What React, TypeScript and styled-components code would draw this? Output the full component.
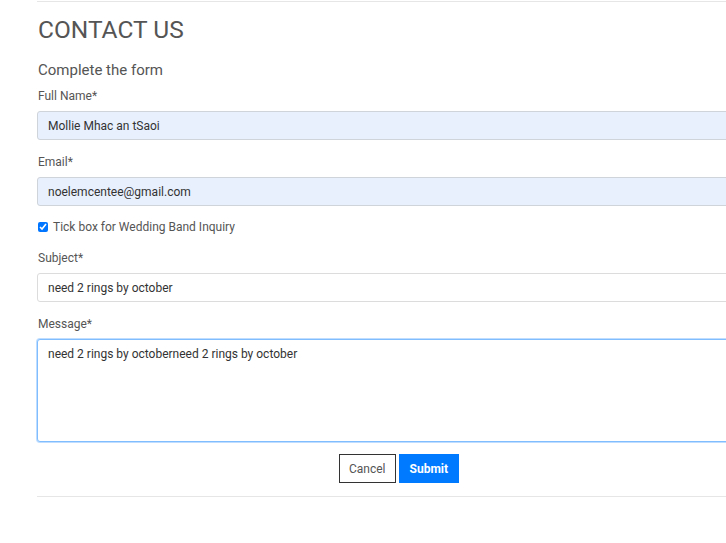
import React, { useEffect, useRef } from "react";
import styled, { createGlobalStyle } from "styled-components";

const Global = createGlobalStyle`
  html, body { margin: 0; padding: 0; background: #fff; overflow: hidden; }
  body { font-family: Roboto, "Liberation Sans", Arial, sans-serif; }
  * { box-sizing: border-box; }
`;

const Page = styled.div`
  width: 726px;
  height: 543px;
  overflow: hidden;
  padding-left: 37px;
`;

const Container = styled.div`
  width: 722px;
  border-top: 1px solid #e6e6e6;
  margin-top: 1px;
`;

const Title = styled.h1`
  margin: 13px 0 0 1px;
  font-size: 24.5px;
  font-weight: 400;
  line-height: 30px;
  color: #555;
`;

const Subtitle = styled.h2`
  margin: 15px 0 0 1px;
  font-size: 15px;
  font-weight: 400;
  line-height: 20px;
  color: #555;
`;

const Form = styled.form`
  display: flex;
  flex-direction: column;
  margin-top: 8px;
  padding-bottom: 13px;
  border-bottom: 1px solid #e6e6e6;
`;

const Group = styled.div<{ $last?: boolean }>`
  display: flex;
  flex-direction: column;
  margin-bottom: ${(p) => (p.$last ? "12px" : "14px")};
`;

const Label = styled.label`
  font-size: 12px;
  line-height: 16px;
  color: #555;
  margin: 0 0 7px 1px;
`;

const Input = styled.input<{ $autofill?: boolean }>`
  height: 29px;
  width: 100%;
  border: 1px solid ${(p) => (p.$autofill ? "#ced4da" : "#dcdcdc")};
  border-radius: 3px;
  background: ${(p) => (p.$autofill ? "#e8f0fe" : "#fff")};
  padding: 0 10px;
  font-family: Roboto, "Liberation Sans", Arial, sans-serif;
  font-size: 12px;
  color: #333;
  outline: none;
`;

const TextArea = styled.textarea`
  height: 103px;
  width: 100%;
  border: 1px solid #80bdff;
  border-radius: 3px;
  box-shadow: 0 0 0 1px rgba(0, 123, 255, 0.25);
  padding: 6px 10px;
  font-family: Roboto, "Liberation Sans", Arial, sans-serif;
  font-size: 12px;
  line-height: 16px;
  color: #333;
  resize: none;
  outline: none;
  caret-color: #333;
`;

const CheckRow = styled.label`
  display: flex;
  align-items: center;
  gap: 5px;
  font-size: 12px;
  color: #555;
  margin: -1px 0 15px 0;
  line-height: 16px;
`;

const Check = styled.input`
  width: 10px;
  height: 10px;
  margin: 0 0 0 1px;
  accent-color: #0075ff;
`;

const Actions = styled.div`
  display: flex;
  justify-content: center;
  gap: 3px;
  margin-left: 2px;
`;

const Button = styled.button<{ $primary?: boolean }>`
  height: 29px;
  padding: 0 ${(p) => (p.$primary ? "10px" : "9px")};
  border: 1px solid ${(p) => (p.$primary ? "#007bff" : "#333")};
  background: ${(p) => (p.$primary ? "#007bff" : "#fff")};
  color: ${(p) => (p.$primary ? "#fff" : "#555")};
  font-family: Roboto, "Liberation Sans", Arial, sans-serif;
  font-size: 12px;
  font-weight: ${(p) => (p.$primary ? 700 : 400)};
  border-radius: 0;
`;

const MESSAGE = "need 2 rings by octoberneed 2 rings by october";

export default function App() {
  const ref = useRef<HTMLTextAreaElement>(null);
  useEffect(() => {
    const el = ref.current;
    if (el) {
      el.focus();
      el.setSelectionRange(MESSAGE.length, MESSAGE.length);
    }
  }, []);
  return (
    <>
      <Global />
      <Page>
        <Container>
          <Title>CONTACT US</Title>
          <Subtitle>Complete the form</Subtitle>
          <Form onSubmit={(e) => e.preventDefault()}>
            <Group>
              <Label>Full Name*</Label>
              <Input $autofill defaultValue="Mollie Mhac an tSaoi" />
            </Group>
            <Group>
              <Label>Email*</Label>
              <Input $autofill defaultValue="noelemcentee@gmail.com" />
            </Group>
            <CheckRow>
              <Check type="checkbox" defaultChecked />
              Tick box for Wedding Band Inquiry
            </CheckRow>
            <Group>
              <Label>Subject*</Label>
              <Input defaultValue="need 2 rings by october" />
            </Group>
            <Group $last>
              <Label>Message*</Label>
              <TextArea ref={ref} defaultValue={MESSAGE} />
            </Group>
            <Actions>
              <Button type="button">Cancel</Button>
              <Button $primary type="submit">Submit</Button>
            </Actions>
          </Form>
        </Container>
      </Page>
    </>
  );
}
